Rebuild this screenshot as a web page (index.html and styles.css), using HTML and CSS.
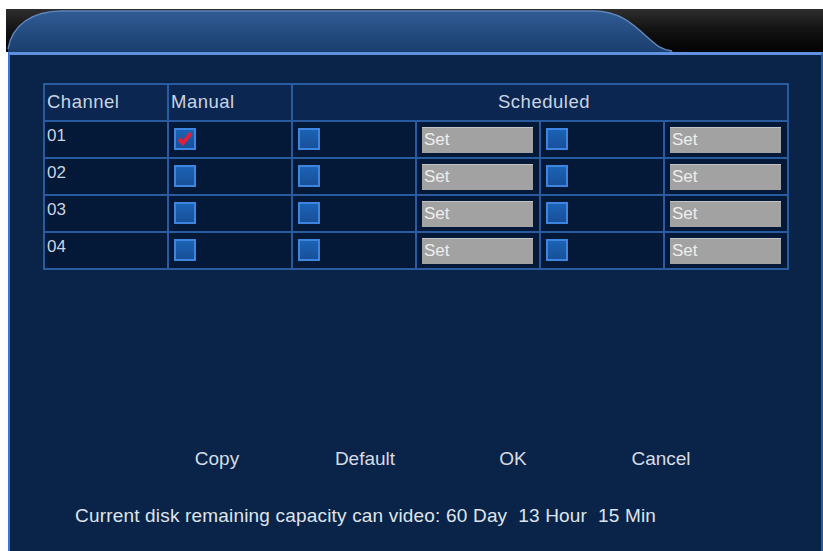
FILE: index.html
```html
<!DOCTYPE html>
<html>
<head>
<meta charset="utf-8">
<link rel="stylesheet" href="styles.css">
</head>
<body>
<div class="frame">
  <div class="tabbar">
    <svg class="tab" width="680" height="43" viewBox="0 0 680 43">
      <defs>
        <linearGradient id="tg" x1="0" y1="0" x2="0" y2="1">
          <stop offset="0" stop-color="#2f5b94"/>
          <stop offset="1" stop-color="#1b3e6e"/>
        </linearGradient>
      </defs>
      <path d="M2,43 L2,40 C6,16 26,2 56,2 L588,2 C612,2 626,14 640,27 C651,37 656,41 666,42 L668,43 Z" fill="url(#tg)"/>
      <path d="M2,40 C6,16 26,2 56,2 L588,2 C612,2 626,14 640,27 C651,37 656,41 666,42" fill="none" stroke="#5f86bb" stroke-width="1.5"/>
    </svg>
  </div>
  <div class="panel">
    <div class="grid">
      <div class="hcell">Channel</div>
      <div class="hcell">Manual</div>
      <div class="hcell span4">Scheduled</div>

      <div class="cell">01</div>
      <div class="cell"><span class="cb checked"><svg width="18" height="18" viewBox="0 0 18 18"><path d="M3,9 L7,13 L15,3" fill="none" stroke="#e0203a" stroke-width="4"/></svg></span></div>
      <div class="cell"><span class="cb"></span></div>
      <div class="cell"><span class="set">Set</span></div>
      <div class="cell"><span class="cb"></span></div>
      <div class="cell"><span class="set">Set</span></div>

      <div class="cell">02</div>
      <div class="cell"><span class="cb"></span></div>
      <div class="cell"><span class="cb"></span></div>
      <div class="cell"><span class="set">Set</span></div>
      <div class="cell"><span class="cb"></span></div>
      <div class="cell"><span class="set">Set</span></div>

      <div class="cell">03</div>
      <div class="cell"><span class="cb"></span></div>
      <div class="cell"><span class="cb"></span></div>
      <div class="cell"><span class="set">Set</span></div>
      <div class="cell"><span class="cb"></span></div>
      <div class="cell"><span class="set">Set</span></div>

      <div class="cell">04</div>
      <div class="cell"><span class="cb"></span></div>
      <div class="cell"><span class="cb"></span></div>
      <div class="cell"><span class="set">Set</span></div>
      <div class="cell"><span class="cb"></span></div>
      <div class="cell"><span class="set">Set</span></div>
    </div>

    <div class="actions">
      <span class="btn">Copy</span>
      <span class="btn">Default</span>
      <span class="btn">OK</span>
      <span class="btn">Cancel</span>
    </div>

    <div class="status">Current disk remaining capacity can video: 60 Day&nbsp; 13 Hour&nbsp; 15 Min</div>
  </div>
</div>
</body>
</html>
```
FILE: styles.css
```css
html, body {
  margin: 0;
  padding: 0;
  background: #ffffff;
}
body {
  font-family: "Liberation Sans", Arial, sans-serif;
}
.frame {
  margin: 9px 0 0 6px;
  width: 817px;
}
.tabbar {
  height: 43px;
  background: linear-gradient(#2e2e2e, #141414 45%, #020202);
  display: flex;
  align-items: flex-end;
}
.tab {
  display: block;
}
.panel {
  margin-left: 2px;
  width: 811px;
  height: 493px;
  background: #0a2449;
  border-top: 3px solid #5f91e0;
  border-left: 2px solid #3d74d6;
  border-right: 2px solid #2c5a9c;
  border-bottom: 1px solid #6a7c90;
  padding-top: 28px;
  box-sizing: content-box;
}
.grid {
  margin-left: 33px;
  width: 746px;
  display: grid;
  grid-template-columns: 122px 122px 122px 122px 122px 122px;
  grid-template-rows: 35px 35px 35px 35px 35px;
  gap: 2px;
  padding: 2px;
  background: #285c9f;
  box-sizing: border-box;
}
.hcell {
  background: #0b2650;
  color: #c9d4e2;
  font-size: 18.5px;
  padding: 6px 0 0 2px;
  letter-spacing: 0.5px;
}
.span4 {
  grid-column: span 4;
  text-align: center;
  padding-left: 8px;
}
.cell {
  background: #041838;
  color: #c9d4e2;
  font-size: 17px;
  padding: 4px 0 0 2px;
}
.cb {
  display: block;
  width: 18px;
  height: 18px;
  margin: 2px 0 0 3px;
  border: 2px solid #3c86e2;
  background: linear-gradient(#1c62b4, #18509a);
}
.cb svg {
  display: block;
}
.set {
  display: block;
  width: 111px;
  height: 26px;
  margin: 1px 0 0 3px;
  background: #a2a2a2;
  border-top: 1px solid #c4c4c4;
  box-sizing: border-box;
  color: #eeeeee;
  font-size: 17px;
  line-height: 24px;
  padding-left: 2px;
}
.actions {
  display: flex;
  margin: 177px 0 0 133px;
}
.btn {
  width: 148px;
  text-align: center;
  color: #d6dce6;
  font-size: 19px;
  line-height: 24px;
}
.status {
  margin: 33px 0 0 65px;
  color: #dfe4ec;
  font-size: 19px;
  line-height: 24px;
  letter-spacing: 0.18px;
}
```
